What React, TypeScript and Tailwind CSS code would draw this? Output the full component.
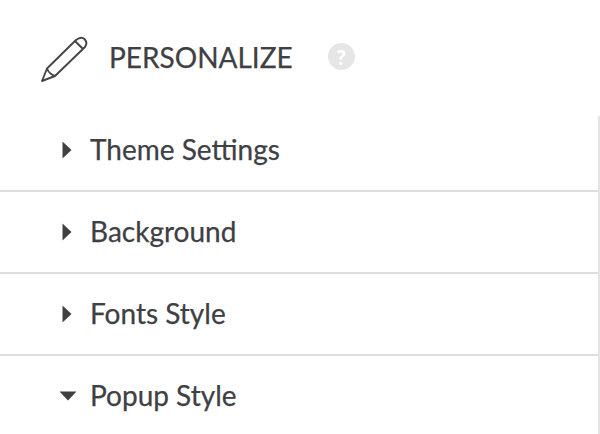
const rows = [
  { label: "Theme Settings", open: false, className: "h-[76px] pb-[6px]" },
  { label: "Background", open: false, className: "h-[82px]" },
  { label: "Fonts Style", open: false, className: "h-[82px]" },
  { label: "Popup Style", open: true, className: "h-[82px]" },
];

function Pencil() {
  return (
    <svg width="48" height="48" viewBox="0 0 48 48" fill="none" stroke="#444549" strokeWidth="1.9" strokeLinejoin="round" className="shrink-0">
      <path d="M2 47 L7 34.5 L36 6 Q41 2 44.5 5 Q48 9 45 13 L15 42 Z" />
      <path d="M35 7 L43 15" />
      <path d="M7 34.5 Q9 40 15 42" />
    </svg>
  );
}

function Caret({ open }: { open: boolean }) {
  if (open) {
    return (
      <svg width="18" height="10" viewBox="0 0 18 10" className="shrink-0 fill-[#3f4044]">
        <path d="M0.5 0.5 H17.5 L9 9.5 Z" />
      </svg>
    );
  }
  return (
    <svg width="10" height="18" viewBox="0 0 10 18" className="shrink-0 fill-[#3f4044]">
      <path d="M0.5 0.5 L9.5 9 L0.5 17.5 Z" />
    </svg>
  );
}

export default function App() {
  return (
    <div className="w-[600px] h-[434px] overflow-hidden bg-white font-['Lato','Open_Sans',sans-serif] text-[#3f4044] [-webkit-text-stroke:0.25px_#3f4044]">
      <div className="h-[116px] flex items-center pl-[40px]">
        <Pencil />
        <span className="ml-[21px] mb-[2px] text-[28px] leading-none">PERSONALIZE</span>
        <span className="ml-[35px] mb-[4px] w-[27px] h-[27px] rounded-full bg-[#e6e6e6] text-white [-webkit-text-stroke:0] text-[21px] font-black leading-none flex items-center justify-center">
          ?
        </span>
      </div>
      <div className="border-r-2 border-[#e4e4e4]">
        {rows.map((row) => (
          <div key={row.label} className={`${row.className} flex items-center border-b-2 border-[#dedede]`}>
            <div className="w-[90px] pl-[59px] flex">
              <div className={row.open ? "" : "pl-[3px]"}>
                <Caret open={row.open} />
              </div>
            </div>
            <span className="mb-[2px] text-[28px] leading-none">{row.label}</span>
          </div>
        ))}
      </div>
    </div>
  );
}
